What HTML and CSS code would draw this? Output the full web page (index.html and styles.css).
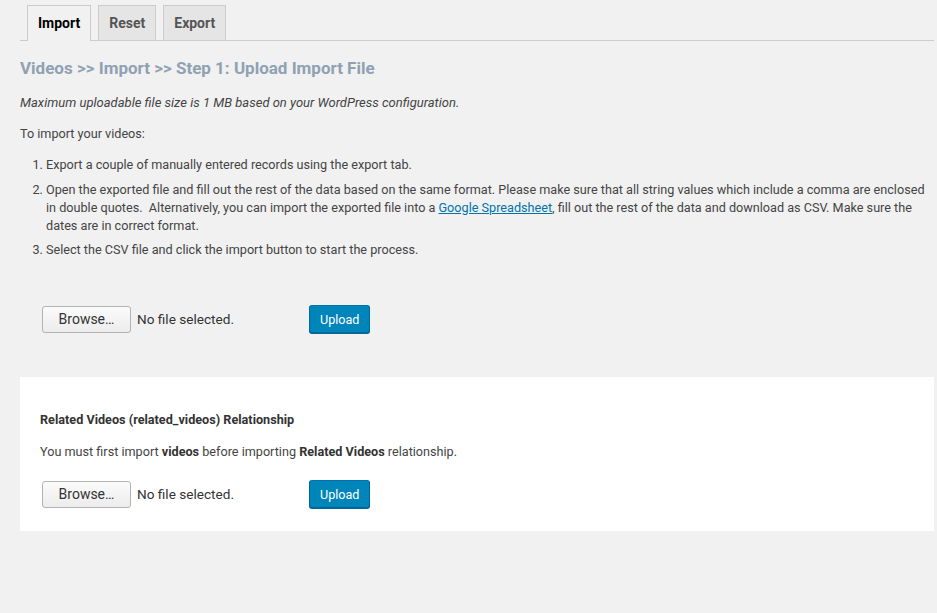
FILE: index.html
```html
<!DOCTYPE html>
<html lang="en">
<head>
<meta charset="utf-8">
<title>Import Videos</title>
<link rel="stylesheet" href="styles.css">
</head>
<body>
<div class="wrap">
  <nav class="tabs">
    <a class="tab active" href="#">Import</a>
    <a class="tab" href="#">Reset</a>
    <a class="tab" href="#">Export</a>
  </nav>

  <h2 class="title">Videos &gt;&gt; Import &gt;&gt; Step 1: Upload Import File</h2>

  <p class="note">Maximum uploadable file size is 1 MB based on your WordPress configuration.</p>
  <p>To import your videos:</p>
  <ol class="steps">
    <li>Export a couple of manually entered records using the export tab.</li>
    <li>Open the exported file and fill out the rest of the data based on the same format. Please make sure that all string values which include a comma are enclosed in double quotes.&nbsp; Alternatively, you can import the exported file into a <a href="#">Google Spreadsheet</a>, fill out the rest of the data and download as CSV. Make sure the dates are in correct format.</li>
    <li>Select the CSV file and click the import button to start the process.</li>
  </ol>

  <div class="upload-row main-row">
    <div class="file">
      <button class="browse" type="button">Browse…</button>
      <span class="file-label">No file selected.</span>
    </div>
    <button class="primary" type="button">Upload</button>
  </div>

  <section class="panel">
    <h3 class="panel-title">Related Videos (related_videos) Relationship</h3>
    <p class="panel-text">You must first import <b>videos</b> before importing <b>Related Videos</b> relationship.</p>
    <div class="upload-row">
      <div class="file">
        <button class="browse" type="button">Browse…</button>
        <span class="file-label">No file selected.</span>
      </div>
      <button class="primary" type="button">Upload</button>
    </div>
  </section>
</div>
</body>
</html>
```

FILE: styles.css
```css
html, body {
  margin: 0;
  padding: 0;
  background: #f1f1f1;
}
body {
  font-family: Roboto, "Liberation Sans", Arial, sans-serif;
  font-size: 12.65px;
  line-height: 18px;
  color: #444;
}
.wrap {
  padding: 5px 3px 0 20px;
}
.tabs {
  display: flex;
  border-bottom: 1px solid #ccc;
  height: 35px;
}
.tab {
  display: block;
  margin-left: 7px;
  padding: 5px 10px;
  height: 24px;
  line-height: 24px;
  border: 1px solid #ccc;
  border-bottom: none;
  background: #e5e5e5;
  color: #555;
  font-size: 14px;
  font-weight: 700;
  text-decoration: none;
}
.tab.active {
  background: #f1f1f1;
  color: #000;
  height: 25px;
}
.title {
  margin: 15px 0 14px;
  font-size: 17px;
  line-height: 24px;
  font-weight: 700;
  color: #8fa1b3;
}
p {
  margin: 0 0 13px;
}
.note {
  font-style: italic;
  font-size: 13px;
}
.steps {
  margin: 1px 0 0;
  padding-left: 26px;
}
.steps li {
  margin-bottom: 6.5px;
  line-height: 18px;
}
.steps a {
  color: #0073aa;
  text-decoration: underline;
}
.upload-row {
  display: flex;
  align-items: center;
  padding-left: 22px;
}
.main-row {
  margin-top: 46px;
}
.file {
  display: flex;
  align-items: center;
  width: 267px;
}
.browse {
  width: 89px;
  height: 27px;
  padding: 0;
  border: 1px solid #b3b3b3;
  border-radius: 3px;
  background: linear-gradient(#fbfbfb, #ececec);
  color: #333;
  font-family: Roboto, "Liberation Sans", Arial, sans-serif;
  font-size: 14px;
}
.file-label {
  margin-left: 6px;
  font-size: 13.6px;
  color: #333;
}
.primary {
  height: 28px;
  padding: 1px 10px 0;
  border: 1px solid #0073aa;
  border-color: #0073aa #006799 #006799;
  border-radius: 3px;
  background: #0085ba;
  box-shadow: 0 1px 0 #006799;
  color: #fff;
  font-family: Roboto, "Liberation Sans", Arial, sans-serif;
  font-size: 12.6px;
}
.panel {
  margin-top: 44px;
  background: #fff;
  padding: 34px 20px 23px;
}
.panel-title {
  margin: 0 0 14px;
  font-size: 12.65px;
  line-height: 18px;
  font-weight: 700;
  color: #333;
}
.panel-text {
  margin: 0 0 19px;
}
.panel-text b {
  color: #333;
}
.panel .upload-row {
  padding-left: 2px;
}
```
